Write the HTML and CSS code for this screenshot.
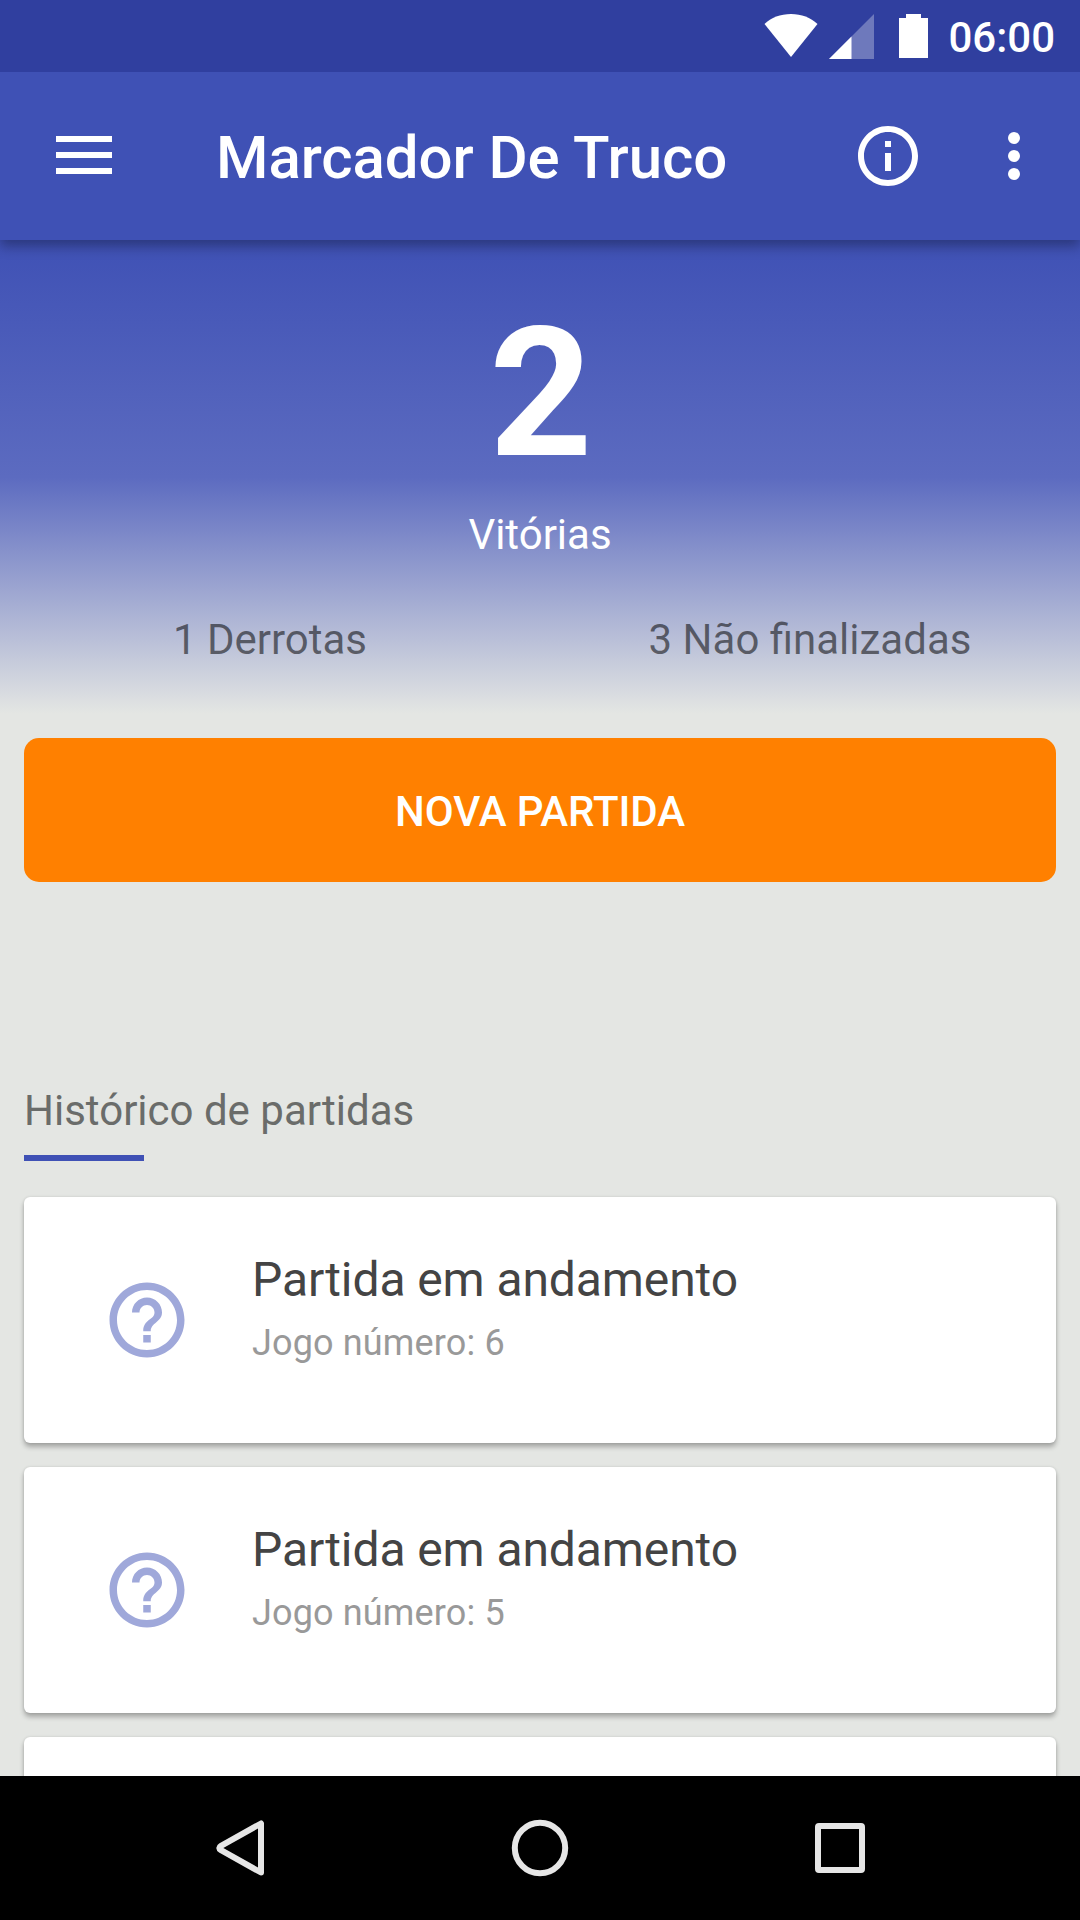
FILE: index.html
```html
<!DOCTYPE html>
<html lang="pt-BR">
<head>
<meta charset="utf-8">
<title>Marcador De Truco</title>
<link rel="stylesheet" href="styles.css">
</head>
<body>
<div class="screen">
  <div class="status-bar">
    <svg class="wifi" width="54" height="44" viewBox="0 0 54 44"><path d="M27 43L.5 10C7 3.500 16.500 0 27 0s19.500 3.500 26.500 10z" fill="#fff"/></svg>
    <svg class="signal" width="45" height="45" viewBox="0 0 45 45"><path d="M45 0v45H0z" fill="#fff" fill-opacity=".3"/><path d="M22.500 22.500V45H0z" fill="#fff"/></svg>
    <svg class="battery" width="29" height="44" viewBox="0 0 29 44"><path d="M7 0h15v4h7v40H0V4h7z" fill="#fff"/></svg>
    <span class="clock">06:00</span>
  </div>
  <header class="app-bar">
    <svg class="menu" width="56" height="38" viewBox="0 0 56 38"><path d="M0 0h56v6H0zM0 16h56v6H0zM0 32h56v6H0z" fill="#fff"/></svg>
    <h1 class="title">Marcador De Truco</h1>
    <svg class="info" width="72" height="72" viewBox="0 0 24 24"><path fill="#fff" d="M11 17h2v-6h-2v6zm1-15C6.480 2 2 6.480 2 12s4.480 10 10 10 10-4.480 10-10S17.520 2 12 2zm0 18c-4.410 0-8-3.590-8-8s3.590-8 8-8 8 3.590 8 8-3.590 8-8 8zM11 9h2V7h-2v2z"/></svg>
    <svg class="more" width="72" height="72" viewBox="0 0 24 24" fill="#fff"><circle cx="12" cy="6" r="2"/><circle cx="12" cy="12" r="2"/><circle cx="12" cy="18" r="2"/></svg>
  </header>
  <main class="content">
    <section class="summary">
      <div class="wins">2</div>
      <div class="wins-label">Vitórias</div>
      <div class="stats"><span>1 Derrotas</span><span>3 Não finalizadas</span></div>
    </section>
    <button class="new-game">NOVA PARTIDA</button>
    <section class="history">
      <h2 class="history-title">Histórico de partidas</h2>
      <div class="rule"></div>
      <div class="cards">
        <article class="card">
          <svg class="help" width="90" height="90" viewBox="0 0 24 24"><path d="M11 18h2v-2h-2v2zm1-16C6.480 2 2 6.480 2 12s4.480 10 10 10 10-4.480 10-10S17.520 2 12 2zm0 18c-4.410 0-8-3.590-8-8s3.590-8 8-8 8 3.590 8 8-3.590 8-8 8zm0-14c-2.210 0-4 1.790-4 4h2c0-1.100.9-2 2-2s2 .9 2 2c0 2-3 1.750-3 5h2c0-2.250 3-2.500 3-5 0-2.210-1.790-4-4-4z"/></svg>
          <div class="card-text">
            <div class="card-title">Partida em andamento</div>
            <div class="card-sub">Jogo número: 6</div>
          </div>
        </article>
        <article class="card">
          <svg class="help" width="90" height="90" viewBox="0 0 24 24"><path d="M11 18h2v-2h-2v2zm1-16C6.480 2 2 6.480 2 12s4.480 10 10 10 10-4.480 10-10S17.520 2 12 2zm0 18c-4.410 0-8-3.590-8-8s3.590-8 8-8 8 3.590 8 8-3.590 8-8 8zm0-14c-2.210 0-4 1.790-4 4h2c0-1.100.9-2 2-2s2 .9 2 2c0 2-3 1.750-3 5h2c0-2.250 3-2.500 3-5 0-2.210-1.790-4-4-4z"/></svg>
          <div class="card-text">
            <div class="card-title">Partida em andamento</div>
            <div class="card-sub">Jogo número: 5</div>
          </div>
        </article>
        <article class="card"></article>
      </div>
    </section>
  </main>
  <nav class="nav-bar">
    <svg width="60" height="60" viewBox="0 0 60 60"><path d="M51 5.500V54.500L11 32.200Q7.500 30 11 27.800z"/></svg>
    <svg width="60" height="60" viewBox="0 0 60 60"><circle cx="30" cy="30" r="25.200"/></svg>
    <svg width="60" height="60" viewBox="0 0 60 60"><rect x="8" y="8" width="44" height="44" rx="1"/></svg>
  </nav>
</div>
</body>
</html>
```
FILE: styles.css
```css
* { box-sizing: border-box; }

body {
  margin: 0;
  font-family: Roboto, "Liberation Sans", sans-serif;
}

svg { display: block; flex: none; }

.screen {
  width: 1080px;
  height: 1920px;
  display: flex;
  flex-direction: column;
  overflow: hidden;
  background: #e4e6e3;
}

.status-bar {
  flex: none;
  height: 72px;
  display: flex;
  align-items: flex-start;
  justify-content: flex-end;
  padding: 14px 25px 0 0;
  background: #303f9f;
  z-index: 2;
}
.signal { margin-left: 11px; }
.battery { margin-left: 25px; }
.clock {
  margin: -14px 0 0 20px;
  font-size: 42px;
  font-weight: 500;
  line-height: 75px;
  color: #fff;
}

.app-bar {
  flex: none;
  height: 168px;
  display: flex;
  align-items: center;
  padding: 0 30px 0 56px;
  background: #3f51b5;
  box-shadow: 0 6px 12px rgba(0, 0, 0, .32);
  z-index: 1;
}
.menu { margin-top: -2px; }
.title {
  flex: 1;
  margin: 0 0 0 104px;
  padding-top: 4px;
  font-size: 60px;
  font-weight: 500;
  letter-spacing: -.07px;
  line-height: 72px;
  white-space: nowrap;
  color: #fff;
}
.more { margin-left: 54px; }

.content {
  flex: 1;
  min-height: 0;
  overflow: hidden;
}

.summary {
  height: 474px;
  padding-top: 64px;
  text-align: center;
  background: linear-gradient(#3f51b5, #5c6bc0 50%, #e4e6e3);
}
.wins {
  padding-left: 2px;
  font-size: 180px;
  font-weight: 700;
  line-height: 180px;
  color: #fff;
}
.wins-label {
  margin-top: 26px;
  font-size: 42px;
  line-height: 50px;
  color: #fff;
}
.stats {
  display: grid;
  grid-template-columns: 1fr 1fr;
  margin-top: 55px;
  font-size: 42px;
  line-height: 50px;
  color: rgba(0, 0, 0, .54);
}

.new-game {
  display: block;
  width: 1032px;
  height: 144px;
  margin: 24px 24px 0;
  padding: 3px 0 0;
  border: 0;
  border-radius: 15px;
  background: #ff8000;
  font: 500 42px/141px Roboto, "Liberation Sans", sans-serif;
  letter-spacing: -.1px;
  color: #fff;
}

.history { padding: 204px 24px 0; }
.history-title {
  margin: 0;
  font-size: 42px;
  font-weight: 400;
  line-height: 50px;
  color: #6a6c6a;
}
.rule {
  width: 120px;
  height: 6px;
  margin: 19px 0 36px;
  background: #3f51b5;
}

.cards {
  display: flex;
  flex-direction: column;
  gap: 24px;
}
.card {
  height: 246px;
  display: flex;
  align-items: center;
  padding-left: 78px;
  border-radius: 6px;
  background: #fff;
  box-shadow: 0 4px 5px rgba(0, 0, 0, .27), 0 0 3px rgba(0, 0, 0, .12);
}
.help { fill: #9fa8da; }
.card-text {
  align-self: flex-start;
  margin-left: 60px;
  padding-top: 55px;
}
.card-title {
  font-size: 48px;
  letter-spacing: -.1px;
  line-height: 56px;
  color: #444;
}
.card-sub {
  margin-top: 14px;
  font-size: 36px;
  letter-spacing: .15px;
  line-height: 42px;
  color: #999;
}

.nav-bar {
  flex: none;
  height: 144px;
  display: flex;
  align-items: center;
  justify-content: center;
  gap: 240px;
  background: #000;
  z-index: 1;
}
.nav-bar svg {
  fill: none;
  stroke: #e6e6e6;
  stroke-width: 6;
  stroke-linejoin: round;
}
```
